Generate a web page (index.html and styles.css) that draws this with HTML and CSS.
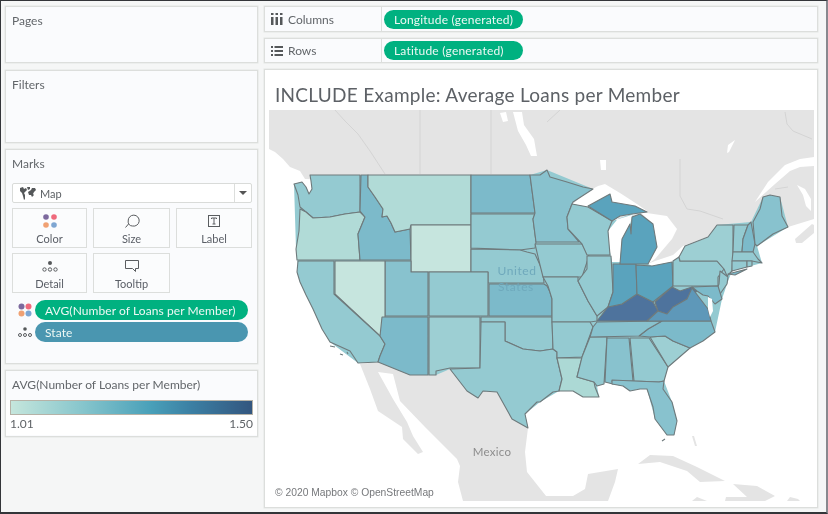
FILE: index.html
```html
<!DOCTYPE html>
<html lang="en">
<head>
<meta charset="utf-8">
<title>INCLUDE Example</title>
<link rel="stylesheet" href="styles.css">
</head>
<body>
<div class="app">
  <aside class="side">
    <section class="card pages"><h2 class="card-title">Pages</h2></section>
    <section class="card filters"><h2 class="card-title">Filters</h2></section>
    <section class="card marks">
      <h2 class="card-title">Marks</h2>
      <div class="select">
        <svg class="map-ico" viewBox="0 0 16 13"><path d="M0 1 3 0 4 2 6 1 7 3 5 5 4 6 5 8 5 12 4 13 3 9 2 6 0 4ZM7 0 10 0 10 2 8 3ZM8 5 11 3 12 1 15 1 16 3 14 5 13 7 14 8 12 10 11 8 9 8Z"/></svg>
        <span class="select-text">Map</span>
        <span class="select-arrow"><i class="caret"></i></span>
      </div>
      <div class="mark-grid">
        <div class="mark-btn">
          <svg class="mark-ico" viewBox="0 0 16 14"><circle class="dot-p" cx="4" cy="3" r="2.800"/><circle class="dot-r" cx="12" cy="3" r="2.800"/><circle class="dot-o" cx="4" cy="11" r="2.800"/><circle class="dot-b" cx="12" cy="11" r="2.800"/></svg>
          <span>Color</span>
        </div>
        <div class="mark-btn">
          <svg class="mark-ico" viewBox="0 0 16 14"><path class="line" d="M4.500 10 1.500 13.500M4.200 7a5.500 5.500 0 1 1 4.300 5 4.200 4.200 0 0 1-4.300-5Z"/></svg>
          <span>Size</span>
        </div>
        <div class="mark-btn">
          <svg class="mark-ico" viewBox="0 0 16 14"><rect class="line" x="2.500" y="1.500" width="11" height="11"/><path class="line" d="M5.500 5V4h5v1M8 4v6M6.500 10h3"/></svg>
          <span>Label</span>
        </div>
        <div class="mark-btn">
          <svg class="mark-ico" viewBox="0 0 16 14"><circle class="dot-k" cx="8" cy="4" r="2"/><circle class="line" cx="2.500" cy="10.500" r="1.700"/><circle class="line" cx="8" cy="10.500" r="1.700"/><circle class="line" cx="13.500" cy="10.500" r="1.700"/></svg>
          <span>Detail</span>
        </div>
        <div class="mark-btn">
          <svg class="mark-ico" viewBox="0 0 16 14"><path class="line" d="M1.500 1.500h13v8h-3v3l-3-3h-7Z"/></svg>
          <span>Tooltip</span>
        </div>
      </div>
      <div class="pill-row">
        <svg class="pill-ico" viewBox="0 0 14 14"><circle class="dot-p" cx="3.500" cy="3.500" r="3"/><circle class="dot-r" cx="10.500" cy="3.500" r="3"/><circle class="dot-o" cx="3.500" cy="10.500" r="3"/><circle class="dot-b" cx="10.500" cy="10.500" r="3"/></svg>
        <span class="pill pill-green pill-wide">AVG(Number of Loans per Member)</span>
      </div>
      <div class="pill-row">
        <svg class="pill-ico" viewBox="0 0 14 14"><circle class="dot-k" cx="7" cy="4" r="1.800"/><circle class="line" cx="2" cy="10" r="1.500"/><circle class="line" cx="7" cy="10" r="1.500"/><circle class="line" cx="12" cy="10" r="1.500"/></svg>
        <span class="pill pill-blue pill-wide">State</span>
      </div>
    </section>
    <section class="card legend">
      <h2 class="card-title">AVG(Number of Loans per Member)</h2>
      <div class="legend-body">
        <div class="ramp"></div>
        <div class="ramp-labels"><span>1.01</span><span>1.50</span></div>
      </div>
    </section>
  </aside>
  <main class="main">
    <div class="card shelf">
      <div class="shelf-label">
        <svg class="shelf-ico" viewBox="0 0 12 12"><path d="M0 4h2.500v8H0ZM4.500 4H7v8H4.500ZM9 4h2.500v8H9ZM0 0h2.500v2H0ZM4.500 0H7v2H4.500ZM9 0h2.500v2H9Z"/></svg>
        <span>Columns</span>
      </div>
      <span class="pill pill-green pill-shelf">Longitude (generated)</span>
    </div>
    <div class="card shelf">
      <div class="shelf-label">
        <svg class="shelf-ico" viewBox="0 0 12 12"><path d="M0 1h2v2H0ZM3.500 1H12v2H3.500ZM0 5h2v2H0ZM3.500 5H12v2H3.500ZM0 9h2v2H0ZM3.500 9H12v2H3.500Z"/></svg>
        <span>Rows</span>
      </div>
      <span class="pill pill-green pill-shelf">Latitude (generated)</span>
    </div>
    <section class="vis">
      <h1 class="vis-title">INCLUDE Example: Average Loans per Member</h1>
      <svg class="map" viewBox="269 111 545 391" role="img" aria-label="Map of the United States">
        <rect class="water" x="269" y="111" width="545" height="391"/>
        <!-- Canada -->
        <path class="land" d="M269 111H814V220L788 228 760 236 720 242 690 256 650 264 620 245 590 222 560 190 305 180 300 172 290 168 283 160 275 153 269 150Z"/>
        <path class="land" d="M795 240 812 225 814 226 814 234 802 244 796 244Z"/>
        <!-- Lakes and gulf -->
        <path class="water" d="M500 114 506 113 508 122 503 123ZM513 113 522 113 524 126 534 140 537 157 531 157 526 146 518 132ZM600 161 606 161 606 171 601 171ZM728 146 735 141 729 153 727 154ZM755 203 768 183 785 166 800 160 814 158 814 167 800 168 790 172 775 185ZM797 186 805 190 811 200 811 212 806 207 803 196Z"/>
        <!-- Mexico, Baja and the Caribbean -->
        <path class="land" d="M360 365 378 363 410 376 436 376 436 372 450 370 467 392 478 399 483 392 497 393 512 420 528 429 525 453 527 473 550 502H463L458 483 460 467 457 460 425 428 400 402 393 375 378 373 393 400 407 423 413 437 423 453 418 455 403 440 402 428 378 412 370 390Z"/>
        <path class="land" d="M638 465 650 456 673 457 697 468 725 482 700 483 687 472 660 463ZM588 475 618 470 615 483 608 502H540V497L573 497 585 490ZM733 485 757 487 775 497 765 502H725L726 498 747 498ZM692 502 697 498 707 502ZM787 502 790 498 798 500 800 502ZM692 437 694 437 697 447 695 447Z"/>
        <g class="borders">
          <path d="M335 111 345 122 358 135 370 152 385 175M420 111V175M491 111V175M547 123 560 111M680 160V197L687 210 700 212 723 220M785 113 787 125 793 132 812 140M775 190 788 188"/>
        </g>
        <!-- Silhouette under the states -->
        <path class="t5" d="M294 185 302 183 306 188 309 195 312 190 311 176H530L547 171 593 190 573 203 572 205 588 208 612 222 632 215 657 248 648 265 679 258 708 238 717 226 751 223 763 198 780 198 788 228 757 247 762 264 732 272 727 285 722 300 715 333 690 349 668 368 664 382 672 403 677 422 674 436 667 436 655 420 647 390 623 387 612 385 605 383 597 387 599 398 583 398 573 392 559 392 540 403 525 415 528 429 512 420 497 393 483 392 478 399 467 392 450 370 436 376 410 376 378 363 358 364 330 343 300 283 296 250Z"/>
        <path class="water" d="M588 208 612 222 635 215 647 212 637 205 620 194 605 185 598 187 585 194 573 205ZM640 213 667 217 677 230 672 240 655 260 648 265 657 248 653 225ZM648 265 655 262 673 256 683 247 707 238 708 242 685 250 680 258 672 263 652 267ZM608 232 620 217 633 215 630 225 622 240 620 263 612 263 609 248Z"/>
        <!-- States -->
        <g class="states">
          <path class="t5" d="M310 176H360V213L345 215 330 218 313 219 306 213 300 208 298 196 294 185 302 183 306 188 309 195 312 190 311 182Z"/>
          <path class="t2" d="M300 210 306 213 313 219 330 218 345 215 360 213 365 218 358 235 360 261H297L296 250 299 232Z"/>
          <path class="t7" d="M361 176H368V188L375 198 383 210 382 218 387 217 391 224 395 233 410 230 411 261H360L358 235 365 218 360 212Z"/>
          <path class="t2" d="M368 176H471V226H411L410 230 395 233 391 224 387 217 382 218 383 210 375 198 368 188Z"/>
          <path class="t1" d="M411 226H471V273H411Z"/>
          <path class="t7" d="M471 176H530L535 214H471Z"/>
          <path class="t5" d="M471 215H535L533 220 536 243 535 249 520 251 471 249Z"/>
          <path class="t5" d="M471 250 520 251 527 253 535 255 540 266 543 273 544 284H488V273H471Z"/>
          <path class="t5" d="M429 273H488V317H429Z"/>
          <path class="t6" d="M385 262H411V273H428V317H385Z"/>
          <path class="t1" d="M335 262H385V327L380 337 335 295Z"/>
          <path class="t5" d="M298 262H334V295L380 337 385 345 380 357 378 363 358 364 350 352 330 343 322 330 313 310 306 296 300 283 297 273Z"/>
          <path class="t7" d="M382 318H428V376H410L378 363 380 357 385 345 380 337Z"/>
          <path class="t4" d="M429 318H480V369H450L436 372V376H429Z"/>
          <path class="t7" d="M489 285H544L547 287 550 293 552 300V317H489Z"/>
          <path class="t5" d="M481 318H552L553 350 540 352 523 350 505 342V323H481Z"/>
          <path class="t5" d="M481 323H505V342L523 350 540 352 553 350 557 353V359L562 380 559 392 553 393 540 403 537 403 525 415 528 429 512 420 497 393 483 392 478 399 467 392 450 370 480 369Z"/>
          <path class="t6" d="M530 176H540L547 171 550 178 567 183 583 188 593 190 573 203 572 205 567 218 568 230 579 243H536L533 220 535 214Z"/>
          <path class="t5" d="M535 245H579L582 245 589 257 582 278H543L540 266Z"/>
          <path class="t5" d="M543 278H578L578 282 588 302 597 317V322L590 323H552L552 300 548 287Z"/>
          <path class="t5" d="M552 323H590L593 328 582 358 557 359V353L553 350Z"/>
          <path class="t3" d="M557 359H582L577 378 594 383 595 388 599 398 583 398 573 392 559 392 562 380Z"/>
          <path class="t5" d="M572 205 588 208 612 222 608 232 610 256H587L582 245 568 230 567 218Z"/>
          <path class="t5" d="M587 257H611L613 293 608 308 597 317 588 302 578 282 587 270Z"/>
          <path class="t5" d="M590 338H607L604 385 597 387 594 383 577 378 582 358Z"/>
          <path class="t6" d="M607 339H629L633 382H612L613 385 605 383Z"/>
          <path class="t5" d="M630 339H649L668 368 664 382 659 383 634 382Z"/>
          <path class="t6" d="M612 381 634 382 659 383 664 382 663 390 672 403 677 422 674 436 667 436 655 420 653 408 647 390 640 390 630 392 623 387 612 385Z"/>
          <path class="t4" d="M650 338 665 337 673 342 690 349 668 368Z"/>
          <path class="t7" d="M639 337 648 330 662 322H711L715 333 703 342 690 349 673 342 665 337 650 338Z"/>
          <path class="t6" d="M597 323 662 322 648 330 639 337 590 338 593 328Z"/>
          <path class="t10" d="M597 322 608 308 622 305 637 295 653 303 658 312 647 322Z"/>
          <path class="t10" d="M655 303 672 288 680 292 692 288 697 292 687 300 673 308 667 315 658 312Z"/>
          <path class="t9" d="M647 322 658 312 667 315 673 308 687 300 692 289 708 310 711 322Z"/>
          <path class="t8" d="M613 265H636L637 295 622 305 608 308 613 293Z"/>
          <path class="t8" d="M636 266 652 267 672 263 673 287 653 303 637 295Z"/>
          <path class="t8" d="M588 207 610 195 612 203 635 207 647 213 632 215 620 217 612 222Z"/>
          <path class="t8" d="M632 218 640 215 653 225 657 248 648 265H620L622 240 630 225 631 235Z"/>
          <path class="t5" d="M673 262 679 258 680 262H717L724 270 718 278V287H673Z"/>
          <path class="t4" d="M679 258 685 247 708 238 717 226H733V253L732 272 727 277 724 270 717 262H680Z"/>
          <path class="t5" d="M734 226H748L743 240 742 253H733Z"/>
          <path class="t7" d="M748 226 751 223 755 245 753 253H742L743 240Z"/>
          <path class="t6" d="M753 223 760 210 763 198 770 196 780 198 782 217 788 228 773 235 757 247 755 245Z"/>
          <path class="t5" d="M733 253H753L758 260 762 264 752 262H732Z"/>
          <path class="t5" d="M732 262H747V268L732 272Z"/>
          <path class="t5" d="M747 262H752V267L747 268Z"/>
          <path class="t5" d="M720 272 728 278 727 285 720 295 716 292 719 285Z"/>
          <path class="t7" d="M692 288 718 287 722 300 715 305 708 297 703 296 697 292Z"/>
          <path class="t7" d="M728 275 747 270 735 276Z"/>
          <path class="t5" d="M330 347 335 348M340 355 343 356M347 353 348 355M662 442 665 440"/>
          <path class="water" d="M708 298 712 300 713 312 710 318 708 310Z"/>
        </g>
        <text class="lbl-us" x="517" y="276" text-anchor="middle">United</text>
        <text class="lbl-us" x="516" y="292" text-anchor="middle">States</text>
        <text class="lbl-mx" x="492" y="457" text-anchor="middle">Mexico</text>
        <text class="lbl-cr" x="275" y="497">© 2020 Mapbox © OpenStreetMap</text>
      </svg>
    </section>
  </main>
</div>
</body>
</html>
```

FILE: styles.css
```css
* { box-sizing: border-box; }
html, body { margin: 0; padding: 0; }
body { width: 828px; height: 514px; overflow: hidden; background: #f5f6f6; font-family: Lato, "Open Sans", sans-serif; color: #5f6468; }

.app {
  width: 828px;
  height: 514px;
  display: flex;
  gap: 6px;
  padding: 5px 8px 4px 4px;
  background: #f5f6f6;
  border-style: solid;
  border-color: #333539 #88888e #333539 #333539;
  border-width: 1px 2px 2px 1px;
  filter: blur(.3px);
}

.side { width: 253px; flex: none; display: flex; flex-direction: column; gap: 6px; }
.main { flex: 1; min-width: 0; display: flex; flex-direction: column; gap: 6px; }

.card { background: #fafbfd; border: 1px solid #dcdedc; box-shadow: 0 0 0 .5px #e4e6e4; }
.card-title { margin: 0; padding: 6px 0 0 6px; font-size: 12px; font-weight: 400; line-height: 15px; color: #62666a; }

.pages { height: 57px; margin-bottom: 1px; }
.filters { height: 73px; }
.marks { height: 215px; }
.legend { height: 67px; }

.marks .card-title { padding-top: 6px; }
.select {
  margin: 12px 5px 0 6px;
  height: 20px;
  display: flex;
  align-items: center;
  background: #fff;
  border: 1px solid #d9dbd9;
  border-radius: 2px;
  font-size: 11px;
}
.map-ico { width: 16px; height: 13px; margin-left: 7px; fill: #55585a; }
.select-text { margin-left: 4px; color: #5c6064; }
.select-arrow { margin-left: auto; width: 17px; height: 100%; border-left: 1px solid #dcdedc; display: flex; align-items: center; justify-content: center; }
.caret { width: 0; height: 0; border-style: solid; border-width: 4px 4px 0; border-color: #555 transparent transparent; }

.mark-grid { margin: 5px 5px 0 6px; display: grid; grid-template-columns: 75px 77px 76px; grid-auto-rows: 40px; gap: 5px 6px; }
.mark-btn {
  display: flex;
  flex-direction: column;
  align-items: center;
  background: #fbfcfd;
  border: 1px solid #dcdedc;
  font-size: 11px;
  color: #5a5e66;
  line-height: 13px;
  padding-top: 5px;
}
.mark-ico { width: 16px; height: 14px; margin-bottom: 4px; }
.line { fill: none; stroke: #5a5d60; stroke-width: 1; }
.dot-p { fill: #7d6a9e; }
.dot-r { fill: #ef6a7c; }
.dot-o { fill: #f0a173; }
.dot-b { fill: #7ea6d2; }
.dot-k { fill: #55585a; }

.pill-row { margin: 2px 9px 0 12px; display: flex; align-items: center; gap: 3px; height: 20px; }
.mark-grid + .pill-row { margin-top: 7px; }
.pill-ico { width: 14px; height: 14px; flex: none; }
.pill {
  display: flex;
  align-items: center;
  color: #eef8f4;
  font-size: 12px;
  letter-spacing: .2px;
  border-radius: 10px;
}
.pill-wide { flex: 1; height: 20px; padding-left: 10px; letter-spacing: .08px; }
.pill-green { background: #00b180; }
.pill-blue { background: #4a96b0; }

.legend-body { margin-top: 8px; padding: 0 4px; background: #fff; height: 35px; }
.ramp { height: 15px; border: 1px solid #b6b2a7; background: linear-gradient(90deg, #c5e6dc 0%, #86c5cc 30%, #49a0b9 58%, #3b7fa3 75%, #33567f 100%); }
.ramp-labels { display: flex; justify-content: space-between; font-size: 12px; line-height: 18px; color: #5f6367; }
.legend .card-title { padding-top: 6px; }

.shelf { height: 26px; display: flex; align-items: center; }
.shelf + .shelf { height: 25px; }
.shelf-label { width: 117px; height: 100%; flex: none; display: flex; align-items: center; gap: 5px; padding-left: 6px; border-right: 1px solid #dcdedc; font-size: 12px; color: #62666a; }
.shelf-ico { width: 12px; height: 12px; fill: #55585a; }
.pill-shelf { margin-left: 2px; width: 139px; height: 19px; padding-left: 10px; }

.vis { flex: 1; min-height: 0; background: #fff; border: 1px solid #dcdedc; box-shadow: 0 0 0 .5px #e4e6e4; padding: 0 3px 4px 4px; display: flex; flex-direction: column; }
.vis-title { margin: 0; height: 40px; padding: 13px 0 0 6px; font-size: 19px; line-height: 24px; font-weight: 400; color: #5d6166; white-space: nowrap; letter-spacing: .27px; }
.map { display: block; width: 545px; height: 391px; }

.water { fill: #fff; }
.land { fill: #e4e4e4; }
.borders path { fill: none; stroke: #cfcfcf; stroke-width: .8; }
.states path { stroke: #6f7a7c; stroke-width: 1.1; stroke-linejoin: round; }
.states .water { fill: #fff; stroke: none; }
.t1 { fill: #c6e5de; }
.t2 { fill: #b1dbd7; }
.t3 { fill: #acd9d5; }
.t4 { fill: #9dcfd3; }
.t5 { fill: #94cad1; }
.t6 { fill: #88c2ce; }
.t7 { fill: #7cbaca; }
.t8 { fill: #5aa3bd; }
.t9 { fill: #5e98b9; }
.t10 { fill: #4e739d; }
.lbl-us { font-family: Lato, sans-serif; font-size: 12px; letter-spacing: .6px; fill: #6fa9bc; }
.lbl-mx { font-family: Lato, sans-serif; font-size: 11.500px; letter-spacing: .3px; fill: #8d8d8d; }
.lbl-cr { font-family: "Liberation Sans", sans-serif; font-size: 10.300px; fill: #77797c; }
```
